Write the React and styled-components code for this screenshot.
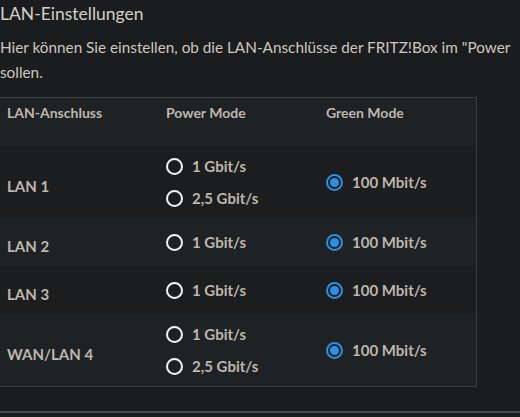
import React from "react";
import styled, { createGlobalStyle } from "styled-components";

const GlobalStyle = createGlobalStyle`
  html, body {
    margin: 0;
    padding: 0;
    background: #1b1c1e;
    overflow: hidden;
  }
  body {
    font-family: Lato, "Noto Sans", sans-serif;
    color: #cbc6bf;
  }
`;

const ports = [
  { name: "LAN 1", power: ["1 Gbit/s", "2,5 Gbit/s"] },
  { name: "LAN 2", power: ["1 Gbit/s"] },
  { name: "LAN 3", power: ["1 Gbit/s"] },
  { name: "WAN/LAN 4", power: ["1 Gbit/s", "2,5 Gbit/s"] },
];

const Radio = ({ checked, label }) => (
  <RadioLabel>
    <RadioDot checked={checked} />
    <span>{label}</span>
  </RadioLabel>
);

const App = () => (
  <>
    <GlobalStyle />
    <Page>
      <Title>LAN-Einstellungen</Title>
      <Intro>
        Hier können Sie einstellen, ob die LAN-Anschlüsse der FRITZ!Box im "Power
        <br />
        sollen.
      </Intro>
      <Table>
        <HeadRow>
          <Cell>LAN-Anschluss</Cell>
          <Cell>Power Mode</Cell>
          <Cell>Green Mode</Cell>
        </HeadRow>
        {ports.map((port, i) => (
          <Row key={port.name} striped={i % 2 === 1} tall={port.power.length > 1}>
            <PortName>{port.name}</PortName>
            <Cell>
              <RadioStack>
                {port.power.map((p) => (
                  <Radio key={p} label={p} />
                ))}
              </RadioStack>
            </Cell>
            <Cell>
              <Radio checked label="100 Mbit/s" />
            </Cell>
          </Row>
        ))}
      </Table>
      <Rule />
    </Page>
  </>
);

const Page = styled.div`
  width: 520px;
  padding-top: 1px;
`;

const Title = styled.h2`
  margin: 0;
  font-size: 17.5px;
  font-weight: 400;
  line-height: 26px;
  color: #d3cfc9;
  white-space: nowrap;
`;

const Intro = styled.p`
  margin: 8px 0 0;
  font-size: 15.3px;
  line-height: 25px;
  white-space: nowrap;
  color: #cdc8c0;
`;

const Table = styled.div`
  margin-top: 12px;
  width: 477px;
  border: 1px solid #3a3d41;
  border-left: none;
  box-sizing: border-box;
`;

const HeadRow = styled.div`
  display: grid;
  grid-template-columns: 159px 160px 1fr;
  height: 48px;
  background: #1f2224;
  font-weight: 700;
  font-size: 14px;
  color: #bdb7ae;
  padding-top: 6px;
  box-sizing: border-box;
`;

const Row = styled.div`
  display: grid;
  grid-template-columns: 159px 160px 1fr;
  align-items: center;
  height: ${(p) => (p.tall ? "72px" : "48px")};
  background: ${(p) => (p.striped ? "#1f2224" : "#1b1d1f")};
  font-weight: 700;
  font-size: 15px;
  color: #bdb7ae;
`;

const Cell = styled.div`
  padding-left: 7px;
`;

const PortName = styled(Cell)`
  padding-top: 8px;
`;

const RadioStack = styled.div`
  display: flex;
  flex-direction: column;
  gap: 11px;
`;

const RadioLabel = styled.label`
  display: flex;
  align-items: center;
  gap: 9px;
  font-size: 15px;
  font-weight: 700;
  color: #bdb7ae;
  height: 21px;
`;

const RadioDot = styled.span`
  width: 17px;
  height: 17px;
  box-sizing: border-box;
  border-radius: 50%;
  border: 2px solid ${(p) => (p.checked ? "#2b8fe3" : "#f2f2f2")};
  display: flex;
  align-items: center;
  justify-content: center;
  &::after {
    content: "";
    display: ${(p) => (p.checked ? "block" : "none")};
    width: 9px;
    height: 9px;
    border-radius: 50%;
    background: #2b8fe3;
  }
`;

const Rule = styled.div`
  margin-top: 24px;
  height: 2px;
  background: #4a4c50;
`;

export default App;
